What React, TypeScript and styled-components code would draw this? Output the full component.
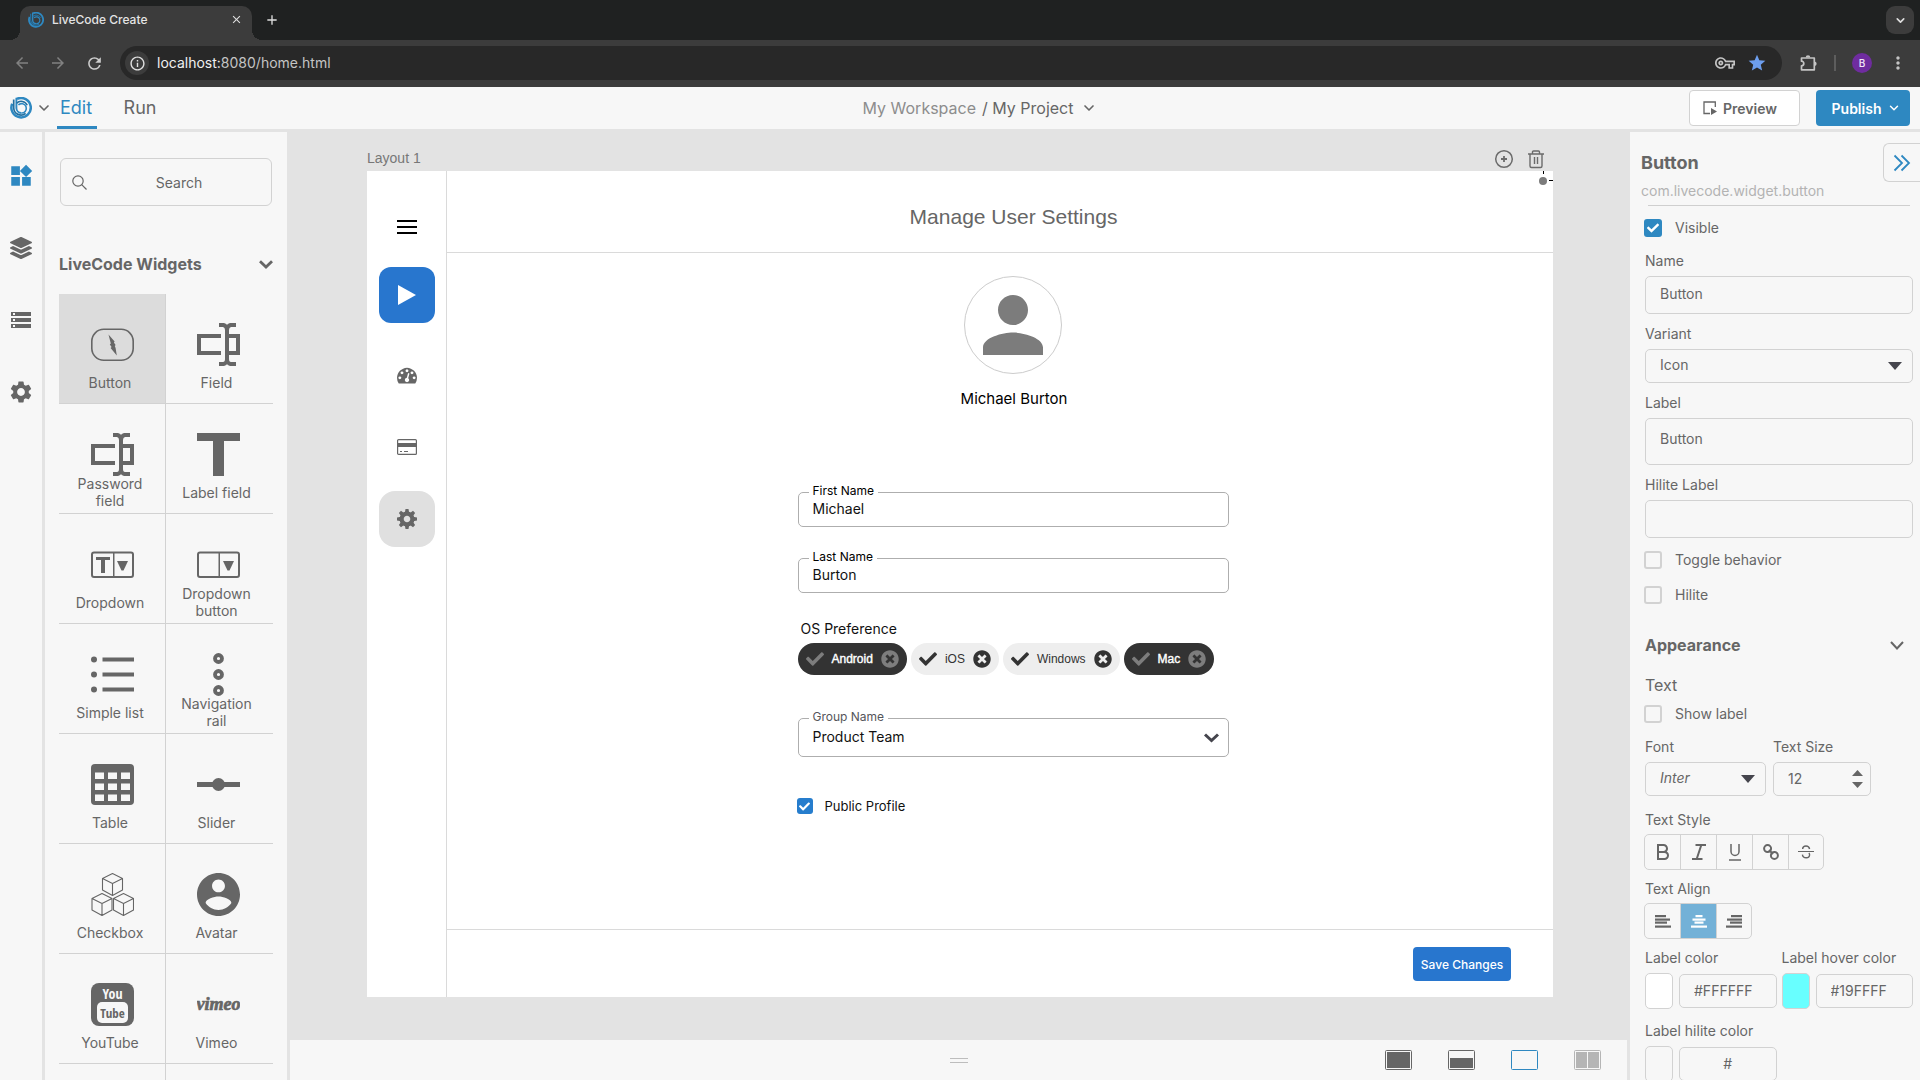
import React from 'react';
import styled, { createGlobalStyle, css } from 'styled-components';
import {
  MdArrowBack, MdArrowForward, MdRefresh, MdInfoOutline, MdOutlineVpnKey, MdStar,
  MdMoreVert, MdWidgets, MdStorage, MdSettings, MdClose, MdAdd,
} from 'react-icons/md';
import { FaLayerGroup, FaCheck, FaTimesCircle } from 'react-icons/fa';
import { RiBold } from 'react-icons/ri';
import { ChevronDown } from 'lucide-react';

const sans = '"Inter", "Liberation Sans", sans-serif';
const helv = '"Liberation Sans", Arial, sans-serif';
const ink = '#666666';
const blue = '#2e88c1';
const action = '#2876ce';
const panel = '#f7f7f7';
const ground = '#e3e3e3';
const line = '#d2d2d2';

const Global = createGlobalStyle`
  *, *::before, *::after { box-sizing: border-box; }
  body { margin: 0; background: ${ground}; font-family: ${sans}; color: ${ink}; overflow: hidden; }
  button, input, select, textarea { font: inherit; color: inherit; }
  button { padding: 0; border: 0; background: none; cursor: pointer; }
  h1, h2, h3, p { margin: 0; }
  svg { display: block; flex: none; }
`;

const Shell = styled.div`
  height: 100vh;
  display: flex;
  flex-direction: column;
`;

/* ---------- browser frame ---------- */

const TabStrip = styled.div`
  height: 40px;
  flex: none;
  display: flex;
  align-items: flex-end;
  padding: 0 6px 0 20px;
  background: #1f2121;
`;
const BrowserTab = styled.div`
  width: 232px;
  height: 34px;
  display: flex;
  align-items: center;
  gap: 8px;
  padding: 0 8px 7px;
  border-radius: 10px 10px 0 0;
  background: #3c3c3c;
  color: #e4e4e4;
  font-size: 12px;
  font-weight: 500;
  position: relative;
  &::before, &::after {
    content: '';
    position: absolute;
    bottom: 0;
    width: 10px;
    height: 10px;
  }
  &::before { left: -10px; background: radial-gradient(circle at 0 0, transparent 10px, #3c3c3c 10px); }
  &::after { right: -10px; background: radial-gradient(circle at 100% 0, transparent 10px, #3c3c3c 10px); }
`;
const TabTitle = styled.span`
  flex: 1;
`;
const StripButton = styled.button`
  display: grid;
  place-items: center;
  height: 26px;
  width: 16px;
  color: #dedede;
`;
const NewTab = styled(StripButton)`
  width: 28px;
  margin: 0 auto 7px 6px;
`;
const TabMenu = styled(StripButton)`
  width: 28px;
  height: 28px;
  margin-bottom: 6px;
  border-radius: 9px;
  background: #3c3c3c;
`;
const Toolbar = styled.div`
  height: 47px;
  flex: none;
  display: flex;
  align-items: center;
  padding: 0 11px 1px 10px;
  background: #3c3c3c;
`;
const NavButton = styled.button`
  width: 24px;
  height: 24px;
  margin-right: 12px;
  display: grid;
  place-items: center;
  color: ${(p: { $dim?: boolean }) => (p.$dim ? '#818181' : '#cccccc')};
`;
const Address = styled.div`
  flex: 1;
  height: 34px;
  margin-left: 2px;
  display: flex;
  align-items: center;
  gap: 8px;
  padding: 0 14px 0 5px;
  border-radius: 17px;
  background: #282828;
  color: #c4c4c4;
  font-size: 14px;
`;
const SiteInfo = styled.button`
  width: 24px;
  height: 24px;
  display: grid;
  place-items: center;
  border-radius: 12px;
  background: #3c3c3c;
  color: #e0e0e0;
`;
const AddressText = styled.span`
  flex: 1;
  padding-bottom: 1px;
  b { font-weight: 400; color: #f0f0f0; }
`;
const AddressButton = styled.button`
  display: grid;
  place-items: center;
  width: 22px;
  color: ${(p: { $on?: boolean }) => (p.$on ? '#6d9eee' : '#c4c4c4')};
`;
const AddressTools = styled.div`
  display: flex;
  gap: 10px;
`;
const Extras = styled.div`
  display: flex;
  align-items: center;
  padding-left: 16px;
  color: #c4c4c4;
`;
const Bar = styled.span`
  width: 2px;
  height: 16px;
  margin: 0 16px 0 14px;
  background: #5d5d5d;
`;
const Profile = styled.button`
  width: 20px;
  height: 20px;
  margin-right: 15px;
  border-radius: 50%;
  background: #6f2c9f;
  color: #f2e8f8;
  font-size: 10px;
  font-weight: 500;
`;

/* ---------- application header ---------- */

const Header = styled.header`
  height: 45px;
  flex: none;
  display: grid;
  grid-template-columns: 1fr auto 1fr;
  padding: 0 10px;
  border-bottom: 3px solid ${ground};
  background: ${panel};
`;
const HeaderLeft = styled.div`
  display: flex;
`;
const LogoButton = styled.button`
  display: flex;
  align-items: center;
  gap: 4px;
  width: 47px;
`;
const Mode = styled.button`
  width: 40px;
  margin-right: 24px;
  padding-right: 2px;
  border-top: 3px solid transparent;
  border-bottom: 3px solid ${(p: { $on?: boolean }) => (p.$on ? blue : 'transparent')};
  color: ${(p: { $on?: boolean }) => (p.$on ? blue : ink)};
  font-size: 18px;
  line-height: 24px;
`;
const Crumbs = styled.nav`
  display: flex;
  align-items: center;
  gap: 6px;
  padding-left: 40px;
  font-size: 16px;
  a { color: #8d8d8d; text-decoration: none; }
`;
const Project = styled.button`
  display: flex;
  align-items: center;
  gap: 8px;
`;
const HeaderRight = styled.div`
  display: flex;
  justify-content: flex-end;
  align-items: center;
  gap: 16px;
`;
const HeaderButton = styled.button`
  height: 36px;
  width: ${(p: { $primary?: boolean }) => (p.$primary ? 94 : 111)}px;
  display: flex;
  align-items: center;
  justify-content: center;
  gap: 6px;
  border-radius: 4px;
  font-size: 14px;
  font-weight: 600;
  ${(p: { $primary?: boolean }) =>
    p.$primary
      ? css`background: ${blue}; color: #fff; padding-left: 7px;`
      : css`background: #fff; border: 1px solid ${line}; padding-right: 9px;`}
`;

/* ---------- body columns ---------- */

const Body = styled.div`
  flex: 1;
  min-height: 0;
  display: flex;
`;
const Rail = styled.nav`
  width: 45px;
  flex: none;
  display: flex;
  flex-direction: column;
  align-items: center;
  gap: 44px;
  padding-top: 30px;
  border-right: 3px solid ${ground};
  background: ${panel};
`;
const RailButton = styled.button`
  width: 28px;
  height: 28px;
  display: grid;
  place-items: center;
  color: ${(p: { $on?: boolean }) => (p.$on ? blue : ink)};
`;
const Library = styled.aside`
  width: 242px;
  flex: none;
  overflow: hidden;
  padding: 26px 14px 0;
  background: ${panel};
`;
const SearchBox = styled.label`
  height: 48px;
  margin: 0 1px;
  display: flex;
  align-items: center;
  padding-left: 11px;
  border: 1px solid ${line};
  border-radius: 6px;
`;
const SearchInput = styled.input`
  flex: 1;
  min-width: 0;
  border: 0;
  outline: 0;
  background: none;
  text-align: center;
  font-size: 14px;
  &::placeholder { color: ${ink}; opacity: 1; }
`;
const GroupTitle = styled.button`
  width: 100%;
  height: 24px;
  margin: 46px 0 17px;
  display: flex;
  align-items: center;
  justify-content: space-between;
  font-size: 16px;
  font-weight: 700;
`;
const Widgets = styled.div`
  display: grid;
  grid-template-columns: 1fr 1fr;
  padding-top: 1px;
`;
const Tile = styled.button`
  height: 110px;
  display: flex;
  flex-direction: column;
  align-items: center;
  padding-top: 29px;
  border-bottom: 1px solid ${line};
  background: ${(p: { $on?: boolean }) => (p.$on ? '#dcdcdc' : 'none')};
  &:nth-child(odd) { border-right: 1px solid ${line}; }
  &:nth-child(even) { padding-right: 2px; }
`;
const TileLabel = styled.span`
  width: 90px;
  height: 32px;
  display: flex;
  align-items: center;
  justify-content: center;
  padding-right: 4px;
  font-size: 14px;
  line-height: 17px;
`;

/* ---------- canvas ---------- */

const Stage = styled.main`
  flex: 1;
  min-width: 0;
  display: flex;
  flex-direction: column;
`;
const Work = styled.div`
  flex: 1;
  min-height: 0;
  display: flex;
  flex-direction: column;
  padding: 0 77px 43px 80px;
`;
const LayoutBar = styled.div`
  height: 39px;
  display: flex;
  align-items: flex-end;
  gap: 13px;
  padding: 0 8px 2px 0;
  font-family: ${helv};
  font-size: 14px;
  line-height: 22px;
  color: #777;
  span { flex: 1; }
`;
const LayoutButton = styled.button`
  height: 20px;
`;
const Artboard = styled.section`
  flex: 1;
  display: flex;
  position: relative;
  background: #fff;
`;
const Marker = styled.svg`
  position: absolute;
  top: 0;
  right: 0;
`;
const AppRail = styled.nav`
  width: 80px;
  display: flex;
  flex-direction: column;
  align-items: center;
  gap: 16px;
  padding-top: 28px;
  border-right: 1px solid #dadada;
`;
const AppRailButton = styled.button`
  width: 56px;
  height: 56px;
  display: grid;
  place-items: center;
  border-radius: ${(p: { $tone?: string }) => (p.$tone === 'soft' ? 16 : 12)}px;
  ${(p: { $tone?: string }) =>
    p.$tone === 'solid'
      ? css`background: ${action}; color: #fff; margin: -4px 0 8px;`
      : p.$tone === 'soft'
        ? css`background: #e0e0e0;`
        : ''}
`;
const AppMain = styled.div`
  flex: 1;
  display: flex;
  flex-direction: column;
`;
const AppHeader = styled.div`
  height: 82px;
  display: grid;
  place-items: center;
  padding: 10px 0 0 27px;
  border-bottom: 1px solid #dadada;
  h1 { font-family: ${helv}; font-size: 21px; line-height: 28px; font-weight: 400; }
`;
const FormArea = styled.div`
  flex: 1;
  display: flex;
  justify-content: center;
  padding-left: 26px;
`;
const Form = styled.form`
  width: 431px;
  display: flex;
  flex-direction: column;
  align-items: flex-start;
  padding-top: 23px;
  color: #111;
`;
const Avatar = styled.div`
  width: 98px;
  height: 98px;
  align-self: center;
  display: grid;
  place-items: center;
  border: 1px solid #cccccc;
  border-radius: 50%;
  color: #7c7c7c;
`;
const PersonName = styled.p`
  align-self: center;
  margin: 15px 0 83px;
  padding-left: 2px;
  font-size: 15px;
  line-height: 20px;
  color: #000;
`;
const Outlined = styled.div`
  width: 100%;
  height: ${(p: { $tall?: boolean }) => (p.$tall ? 39 : 35)}px;
  position: relative;
  display: flex;
  align-items: center;
  border: 1px solid #aeaeae;
  border-radius: 5px;
  & + & { margin-top: 31px; }
  label {
    position: absolute;
    left: 10px;
    top: -11px;
    padding: 0 4px;
    background: #fff;
    font-size: 12px;
    line-height: 18px;
    color: ${(p: { $tall?: boolean }) => (p.$tall ? '#55555a' : '#000')};
  }
  input, select {
    width: 100%;
    height: 100%;
    appearance: none;
    border: 0;
    outline: 0;
    padding: 0 14px 3px;
    background: none;
    font-size: 14px;
    color: #111;
  }
  svg { position: absolute; right: 7px; pointer-events: none; color: #45454d; }
`;
const Caption = styled.p`
  margin: 26px 0 4px 3px;
  font-size: 14px;
  line-height: 20px;
`;
const Chips = styled.div`
  display: flex;
  gap: 4px;
  margin-bottom: 43px;
`;
const Chip = styled.button`
  height: 32px;
  display: flex;
  align-items: center;
  gap: 8px;
  padding: 0 8px;
  border-radius: 16px;
  font-family: ${helv};
  font-size: 12px;
  ${(p: { $on?: boolean }) =>
    p.$on
      ? css`background: #333; color: #fff; -webkit-text-stroke: 0.4px #fff; svg { color: #7d7d7d; }`
      : css`background: #eee; color: #333;`}
`;
const FormTick = styled.div`
  margin: 40px 0 0 -1px;
`;
const AppFooter = styled.div`
  height: 68px;
  display: flex;
  justify-content: flex-end;
  align-items: flex-start;
  padding: 17px 42px 0 0;
  border-top: 1px solid #dadada;
`;
const Save = styled.button`
  width: 98px;
  height: 34px;
  border-radius: 4px;
  background: ${action};
  color: #fff;
  font-size: 12px;
  font-weight: 500;
`;
const BottomBar = styled.div`
  height: 40px;
  flex: none;
  margin: 0 3px;
  display: grid;
  grid-template-columns: 1fr auto 1fr;
  align-items: center;
  padding: 0 26px;
  background: ${panel};
`;
const Grip = styled.button`
  grid-column: 2;
  width: 18px;
  height: 5px;
  border: solid #bdbdbd;
  border-width: 1px 0;
`;
const Views = styled.div`
  display: flex;
  justify-content: flex-end;
  gap: 36px;
`;

/* ---------- tick boxes ---------- */

const TickRow = styled.label`
  display: flex;
  align-items: center;
  gap: ${(p: { $app?: boolean }) => (p.$app ? 12 : 13)}px;
  font-size: ${(p: { $app?: boolean }) => (p.$app ? 13 : 14)}px;
  line-height: 18px;
  cursor: pointer;
`;
const TickBox = styled.span`
  display: grid;
  place-items: center;
  color: #fff;
  > * { grid-area: 1 / 1; }
  svg { pointer-events: none; visibility: hidden; z-index: 1; }
  input:checked + svg { visibility: visible; }
`;
const TickInput = styled.input<{ $app?: boolean }>`
  appearance: none;
  margin: 0;
  width: ${p => (p.$app ? 16 : 18)}px;
  height: ${p => (p.$app ? 16 : 18)}px;
  border: 2px solid ${line};
  border-radius: 3px;
  &:checked { border: 0; background: ${p => (p.$app ? '#267dcd' : blue)}; }
`;

function Tick({ label, checked = false, app = false }: { label: string; checked?: boolean; app?: boolean }) {
  return (
    <TickRow $app={app}>
      <TickBox>
        <TickInput type="checkbox" defaultChecked={checked} $app={app} />
        <FaCheck size={app ? 11 : 12} />
      </TickBox>
      {label}
    </TickRow>
  );
}

/* ---------- inspector ---------- */

const Inspector = styled.aside`
  width: 290px;
  flex: none;
  overflow: hidden;
  background: ${panel};
`;
const InspectorHead = styled.div`
  display: flex;
  align-items: flex-start;
  padding-left: 11px;
`;
const InspectorTitle = styled.div`
  flex: 1;
  padding-top: 19px;
  h2 { font-size: 18px; line-height: 24px; font-weight: 700; }
  p { margin-top: 7px; font-size: 14px; line-height: 18px; color: #b3b3b3; }
`;
const Collapse = styled.button`
  width: 37px;
  height: 39px;
  margin-top: 11px;
  display: grid;
  place-items: center;
  border: 1px solid ${line};
  border-right: 0;
  border-radius: 6px 0 0 6px;
  color: ${blue};
`;
const Rule = styled.div`
  height: 1px;
  margin: 5px 10px 0 18px;
  background: #cfcfcf;
`;
const Props = styled.form`
  display: flex;
  flex-direction: column;
  padding: 13px 7px 0 14px;
`;
const Group = styled.div<{ $top: number; $gap: number }>`
  display: flex;
  flex-direction: column;
  gap: ${p => p.$gap}px;
  padding-top: ${p => p.$top}px;
`;
const Field = styled.div<{ $flush?: boolean }>`
  display: flex;
  flex-direction: column;
  gap: ${p => (p.$flush ? 5 : 6)}px;
  padding-left: ${p => (p.$flush ? 0 : 1)}px;
  > label, > span {
    font-size: 14px;
    line-height: 18px;
    padding-left: ${p => (p.$flush ? 1 : 0)}px;
  }
`;
const box = css`
  width: 100%;
  min-width: 0;
  border: 1px solid ${line};
  border-radius: 5px;
  outline: 0;
  background: none;
  font-size: 14px;
`;
const TextInput = styled.input<{ $short?: boolean; $center?: boolean }>`
  ${box}
  height: ${p => (p.$short ? 34 : 38)}px;
  padding: 0 14px ${p => (p.$short ? 2 : 4)}px;
  text-align: ${p => (p.$center ? 'center' : 'left')};
`;
const TextArea = styled.textarea`
  ${box}
  display: block;
  height: 47px;
  resize: none;
  padding: 11px 14px;
  line-height: 18px;
`;
const Picker = styled.div<{ $italic?: boolean }>`
  position: relative;
  display: flex;
  align-items: center;
  select {
    ${box}
    appearance: none;
    height: 34px;
    padding: 0 14px 3px;
    font-style: ${p => (p.$italic ? 'italic' : 'normal')};
  }
  svg { position: absolute; right: 11px; pointer-events: none; color: #45454d; }
`;
const Stepper = styled.div`
  position: relative;
  display: flex;
  align-items: center;
  input { appearance: textfield; }
  input::-webkit-inner-spin-button { display: none; }
`;
const StepButtons = styled.div`
  position: absolute;
  right: 8px;
  display: grid;
  gap: 6px;
`;
const SectionTitle = styled.button`
  display: flex;
  justify-content: space-between;
  align-items: center;
  height: 24px;
  margin: 29px 9px 18px 1px;
  font-size: 16px;
  font-weight: 700;
`;
const SubTitle = styled.h3`
  margin: 0 0 10px 1px;
  font-size: 16px;
  line-height: 20px;
  font-weight: 400;
`;
const Sizes = styled.div`
  display: grid;
  grid-template-columns: 122px 99px;
  gap: 6px;
  padding: 15px 0;
`;
const Segments = styled.div`
  display: flex;
  align-self: flex-start;
  border: 1px solid ${line};
  border-radius: 5px;
  overflow: hidden;
`;
const Segment = styled.button<{ $on?: boolean }>`
  width: 36px;
  height: 34px;
  display: grid;
  place-items: center;
  background: ${p => (p.$on ? '#73b1d7' : 'none')};
  color: ${p => (p.$on ? '#fff' : ink)};
  & + & { border-left: 1px solid ${line}; }
  &:first-child, &:last-child { width: 35px; }
`;
const Colors = styled.div`
  display: grid;
  grid-template-columns: 1fr 1fr;
  gap: 13px 4px;
  padding-top: 10px;
`;
const ColorRow = styled.div`
  display: flex;
  align-items: center;
  gap: 6px;
`;
const Swatch = styled.button<{ $fill: string }>`
  width: 28px;
  height: 36px;
  flex: none;
  border: 1px solid ${line};
  border-radius: 5px;
  background: ${p => p.$fill};
`;

/* ---------- drawings ---------- */

const Logo = ({ size }: { size: number }) => (
  <svg width={size} height={size} viewBox="0 0 22 22" fill="none" stroke={blue}>
    <path d="M7 1.900 A9.700 9.700 0 1 1 2.200 6.800" strokeWidth="2.500" />
    <path d="M3.700 2.500 V11 A7.300 7.300 0 0 0 15.600 16.400" strokeWidth="1.700" stroke="#236f9f" />
    <path d="M6.400 .8 V11.300 A5 5 0 0 0 11.300 16" strokeWidth="1.900" />
    <path d="M6.600 6.300 A6.500 6.500 0 0 1 17.200 8.200" strokeWidth="1.600" stroke="#236f9f" />
    <path d="M11.300 16 A4.700 4.700 0 1 0 8.400 7.900" strokeWidth="1.600" />
  </svg>
);

const Puzzle = () => (
  <svg width="18" height="18" viewBox="0 0 18 18" fill="currentColor">
    <path d="M1.500 4V7.200A2.300 2.300 0 0 1 1.500 11.800V15.800H14.300V4Z" fill="none" stroke="currentColor" strokeWidth="1.700" strokeLinejoin="round" />
    <path d="M5.700 3.500A2.300 2.300 0 0 1 10.300 3.500Z M14.800 7.500A2.300 2.300 0 0 1 14.800 12Z" />
  </svg>
);

const DoubleChevron = () => (
  <svg width="18" height="18" viewBox="0 0 18 18" fill="none" stroke="currentColor" strokeWidth="1.800">
    <path d="M1.500 1.500L9 9L1.500 16.500M8.500 1.500L16 9L8.500 16.500" />
  </svg>
);

const TileArt = ({ children }: { children: React.ReactNode }) => (
  <svg width="43" height="43" viewBox="0 0 43 43" fill={ink}>{children}</svg>
);
const FieldArt = (
  <TileArt>
    <path d="M0 11H24V15H4V28H24V32H0Z M32 11H43V32H32V28H39V15H32Z" />
    <path d="M22 0H27Q30 1 30 2Q30 1 33 0H39V4H34Q32 4.500 32 7V36Q32 39 34 39H39V43H33Q30 42 30 41Q30 42 27 43H22V39H26Q28 39 28 36V7Q28 4.500 26 4H22Z" />
  </TileArt>
);
const Cube = ({ x, y }: { x: number; y: number }) => (
  <path
    transform={`translate(${x} ${y})`}
    d="M0 5.500 L10 .6 L20 5.500 V17 L10 22.400 L0 17 Z L10 10.500 L20 5.500 M10 10.500 V22.400"
    fill="none" stroke={ink} strokeWidth="1.100" strokeLinejoin="round"
  />
);
const tiles: { name: string; on?: boolean; art: React.ReactNode }[] = [
  {
    name: 'Button', on: true, art: (
      <TileArt>
        <rect x=".8" y="6.300" width="41.400" height="31" rx="12" fill="none" stroke={ink} strokeWidth="1.600" />
        <path d="M17.500 11.500L23.600 18.500L22.900 19.500L24.600 22L23.800 23L24.600 25L25.800 32.500L19.600 25L20.600 24L18.800 21.500L19.800 20.500Z" />
      </TileArt>
    ),
  },
  { name: 'Field', art: FieldArt },
  { name: 'Password field', art: FieldArt },
  { name: 'Label field', art: <TileArt><rect width="43" height="8" /><rect x="16" width="11" height="43" /></TileArt> },
  {
    name: 'Dropdown', art: (
      <TileArt>
        <rect x="1" y="9.500" width="41" height="24.500" rx="2" fill="none" stroke={ink} strokeWidth="2" />
        <rect x="22" y="10" width="1.500" height="24" />
        <rect x="5" y="14" width="14" height="3" /><rect x="10" y="14" width="4" height="16" />
        <path d="M26 18H37L32.500 27.500H30.500Z" />
      </TileArt>
    ),
  },
  {
    name: 'Dropdown button', art: (
      <TileArt>
        <rect x="1" y="9.500" width="41" height="24.500" rx="2" fill="none" stroke={ink} strokeWidth="2" />
        <rect x="21.500" y="10" width="1.500" height="24" />
        <path d="M26 18H37L32.500 27.500H30.500Z" />
      </TileArt>
    ),
  },
  {
    name: 'Simple list', art: (
      <TileArt>
        {[6.5, 21.5, 36.5].map(y => (
          <g key={y}><circle cx="3" cy={y} r="3" /><rect x="11.500" y={y - 2} width="31.500" height="4" /></g>
        ))}
      </TileArt>
    ),
  },
  {
    name: 'Navigation rail', art: (
      <TileArt>
        {[5.5, 21.5, 37.5].map(y => (
          <circle key={y} cx="21.500" cy={y} r="3.500" fill="none" stroke={ink} strokeWidth="3.800" />
        ))}
      </TileArt>
    ),
  },
  {
    name: 'Table', art: (
      <TileArt>
        <rect y="1" width="43" height="41" rx="4" />
        {[9.5, 20.5, 31.5].map(y => [4, 17, 30].map(x => (
          <rect key={`${x}-${y}`} x={x} y={y} width="9" height="6.500" fill={panel} />
        )))}
      </TileArt>
    ),
  },
  { name: 'Slider', art: <TileArt><rect y="19" width="43" height="5" /><circle cx="21.500" cy="21.500" r="6.500" /></TileArt> },
  { name: 'Checkbox', art: <TileArt><Cube x={11.5} y={0} /><Cube x={1} y={20} /><Cube x={22.5} y={20} /></TileArt> },
  {
    name: 'Avatar', art: (
      <svg width="43" height="43" viewBox="2 2 20 20" fill={ink}>
        <path d="M12 2C6.480 2 2 6.480 2 12s4.480 10 10 10 10-4.480 10-10S17.520 2 12 2zm0 3c1.660 0 3 1.340 3 3s-1.340 3-3 3-3-1.340-3-3 1.340-3 3-3zm0 14.200c-2.500 0-4.710-1.280-6-3.220.03-1.990 4-3.080 6-3.080 1.990 0 5.970 1.090 6 3.080-1.290 1.940-3.500 3.220-6 3.220z" />
      </svg>
    ),
  },
  {
    name: 'YouTube', art: (
      <TileArt>
        <rect width="43" height="43" rx="8" />
        <rect x="6" y="19" width="31" height="21" rx="5" fill={panel} />
        <text x="21.500" y="16" fill={panel} textAnchor="middle" fontFamily="Open Sans Condensed, DejaVu Sans Condensed, Liberation Sans, sans-serif" fontSize="14" fontWeight="700">You</text>
        <text x="21.500" y="35" textAnchor="middle" fontFamily="Open Sans Condensed, Liberation Sans, sans-serif" fontSize="13" fontWeight="700">Tube</text>
      </TileArt>
    ),
  },
  {
    name: 'Vimeo', art: (
      <TileArt>
        <text x="21.500" y="27" textAnchor="middle" fontFamily="Liberation Serif, serif" fontSize="18" fontStyle="italic" fontWeight="700" stroke={ink} strokeWidth=".7">vimeo</text>
      </TileArt>
    ),
  },
  { name: '', art: null },
  { name: '', art: null },
];

const Triangle = ({ up = false, w = 14, h = 8 }: { up?: boolean; w?: number; h?: number }) => (
  <svg width={w} height={h} viewBox="0 0 14 8" preserveAspectRatio="none" fill="currentColor">
    <path d={up ? 'M7 0L14 8H0Z' : 'M0 0H14L7 8Z'} />
  </svg>
);

const ItalicArt = () => (
  <svg width="14" height="16" viewBox="0 0 14 16" fill="none" stroke="currentColor" strokeWidth="2">
    <path d="M3.500 1H14M0 15H10.500M9.300 1L4.700 15" />
  </svg>
);
const UnderlineArt = () => (
  <svg width="12" height="17" viewBox="0 0 12 17" fill="none" stroke="currentColor" strokeWidth="1.500">
    <path d="M2 0V7.500A4 4 0 0 0 10 7.500V0M0 16H12" />
  </svg>
);
const LinkArt = () => (
  <svg width="16" height="16" viewBox="0 0 16 16" fill="none" stroke="currentColor" strokeWidth="2">
    <circle cx="4.600" cy="4.600" r="3.500" /><circle cx="11.400" cy="11.400" r="3.500" /><path d="M6 6L10 10" />
  </svg>
);
const StrikeArt = () => (
  <svg width="16" height="14" viewBox="0 0 16 14" fill="none" stroke="currentColor" strokeWidth="1.400">
    <path d="M0 6.500H16" strokeWidth="1" />
    <path d="M11.600 4Q11 1 8 1Q4.800 1 4.600 4M4.400 9.600Q4.900 12.800 8.200 12.800Q11.600 12.800 11.600 9.800Q11.600 8.600 10.800 8" />
  </svg>
);

const AlignArt = ({ side }: { side: 'left' | 'center' | 'right' }) => (
  <svg width="16" height="13" viewBox="0 0 16 13" fill="currentColor">
    {(side === 'center' ? [7, 13, 9, 16] : [11, 15, 12, 16]).map((w, i) => (
      <rect key={i} y={[0, 3.5, 6.5, 10.5][i]} height="2.200" width={w}
        x={side === 'left' ? 0 : side === 'right' ? 16 - w : (16 - w) / 2} />
    ))}
  </svg>
);

const ViewArt = ({ kind }: { kind: string }) => {
  const stroke = kind === 'blank' ? blue : kind === 'split' ? '#b5b5b5' : ink;
  return (
    <svg width="27" height="20" viewBox="0 0 27 20" fill={stroke}>
      <rect x=".5" y=".5" width="26" height="19" rx="1" fill="none" stroke={stroke} />
      {kind === 'full' && <rect x="2" y="2" width="23" height="16" />}
      {kind === 'low' && <rect x="2" y="8" width="23" height="10" />}
      {kind === 'split' && <><rect x="2" y="2" width="11" height="16" /><rect x="14" y="2" width="11" height="16" /></>}
    </svg>
  );
};

const GaugeArt = (
  <svg width="20" height="20" viewBox="0 0 1792 1792" fill={ink}>
    <path d="M384 1152q0-53-37.500-90.500t-90.500-37.500-90.500 37.500-37.500 90.500 37.500 90.500 90.500 37.500 90.500-37.500 37.500-90.500zm192-448q0-53-37.500-90.500t-90.500-37.500-90.500 37.500-37.500 90.500 37.500 90.500 90.500 37.500 90.500-37.500 37.500-90.500zm428 481l101-382q6-26-7.500-48.500t-38.500-29.500-48 6.500-30 39.500l-101 382q-60 5-107 43.500t-63 98.500q-20 77 20 146t117 89 146-20 89-117q16-60-6-117t-72-91zm660-33q0-53-37.500-90.500t-90.500-37.500-90.500 37.500-37.500 90.500 37.500 90.500 90.500 37.500 90.500-37.500 37.500-90.500zm-640-640q0-53-37.500-90.500t-90.500-37.500-90.500 37.500-37.500 90.500 37.500 90.500 90.500 37.500 90.500-37.500 37.500-90.500zm448 192q0-53-37.500-90.500t-90.500-37.500-90.500 37.500-37.500 90.500 37.500 90.500 90.500 37.500 90.500-37.500 37.500-90.500zm320 448q0 261-141 483-19 29-54 29h-1402q-35 0-54-29-141-221-141-483 0-182 71-348t191-286 286-191 348-71 348 71 286 191 191 286 71 348z" />
  </svg>
);
const CogArt = (
  <svg width="20" height="20" viewBox="-10 -10 20 20" fill={ink}>
    {[0, 45, 90, 135].map(a => (
      <path key={a} transform={`rotate(${a})`} d="M-1.500 -10H1.500L2.200 -6V-4H-2.200V-6Z M-1.500 10H1.500L2.200 6V4H-2.200V6Z" />
    ))}
    <circle r="5.400" fill="none" stroke={ink} strokeWidth="4.200" />
  </svg>
);

export default function App() {
  return (
    <Shell>
      <Global />
      <TabStrip>
        <BrowserTab>
          <Logo size={16} />
          <TabTitle>LiveCode Create</TabTitle>
          <StripButton aria-label="Close tab"><MdClose size={13} /></StripButton>
        </BrowserTab>
        <NewTab aria-label="New tab"><MdAdd size={16} /></NewTab>
        <TabMenu aria-label="Search tabs"><ChevronDown size={13} strokeWidth={3} /></TabMenu>
      </TabStrip>
      <Toolbar>
        <NavButton $dim aria-label="Back"><MdArrowBack size={18} /></NavButton>
        <NavButton $dim aria-label="Forward"><MdArrowForward size={18} /></NavButton>
        <NavButton aria-label="Reload"><MdRefresh size={19} /></NavButton>
        <Address>
          <SiteInfo aria-label="Site information"><MdInfoOutline size={17} /></SiteInfo>
          <AddressText><b>localhost:</b>8080/home.html</AddressText>
          <AddressTools>
            <AddressButton aria-label="Passwords"><MdOutlineVpnKey size={20} /></AddressButton>
            <AddressButton $on aria-label="Bookmark"><MdStar size={20} /></AddressButton>
          </AddressTools>
        </Address>
        <Extras>
          <AddressButton aria-label="Extensions"><Puzzle /></AddressButton>
          <Bar />
          <Profile>B</Profile>
          <AddressButton aria-label="Menu"><MdMoreVert size={20} /></AddressButton>
        </Extras>
      </Toolbar>

      <Header>
        <HeaderLeft>
          <LogoButton aria-label="LiveCode menu"><Logo size={22} /><ChevronDown size={16} strokeWidth={2.5} /></LogoButton>
          <Mode $on>Edit</Mode>
          <Mode>Run</Mode>
        </HeaderLeft>
        <Crumbs>
          <a href="#workspace">My Workspace</a>
          <Project><span>/ My Project</span><ChevronDown size={16} strokeWidth={2.5} /></Project>
        </Crumbs>
        <HeaderRight>
          <HeaderButton>
            <svg width="14" height="14" viewBox="0 0 14 14" fill={ink}>
              <path d="M7 12.500H1V1H12.300V6" fill="none" stroke={ink} strokeWidth="1.300" />
              <path d="M8 7L14 10.500L8 14Z" />
            </svg>
            Preview
          </HeaderButton>
          <HeaderButton $primary>Publish<ChevronDown size={14} strokeWidth={2.5} /></HeaderButton>
        </HeaderRight>
      </Header>

      <Body>
        <Rail>
          <RailButton $on aria-label="Widgets"><MdWidgets size={26} /></RailButton>
          <RailButton aria-label="Layers"><FaLayerGroup size={22} /></RailButton>
          <RailButton aria-label="Data"><MdStorage size={24} /></RailButton>
          <RailButton aria-label="Settings"><MdSettings size={26} /></RailButton>
        </Rail>

        <Library>
          <SearchBox>
            <svg width="15" height="15" viewBox="0 0 15 15" fill="none" stroke={ink} strokeWidth="1.200">
              <circle cx="6" cy="6" r="5.200" /><path d="M9.700 9.700L14.500 14.500" />
            </svg>
            <SearchInput aria-label="Search" placeholder="Search" />
          </SearchBox>
          <GroupTitle>
            LiveCode Widgets
            <svg width="14" height="9" viewBox="0 0 14 9" fill="none" stroke={ink} strokeWidth="2.800"><path d="M1 1.200L7 7L13 1.200" /></svg>
          </GroupTitle>
          <Widgets>
            {tiles.map((t, i) => (
              <Tile key={i} $on={t.on} aria-label={t.name || undefined}>
                {t.art}
                {t.name && <TileLabel>{t.name}</TileLabel>}
              </Tile>
            ))}
          </Widgets>
        </Library>

        <Stage>
          <Work>
            <LayoutBar>
              <span>Layout 1</span>
              <LayoutButton aria-label="Add layout">
                <svg width="20" height="20" viewBox="0 0 20 20" fill="none" stroke="#6b6b6b" strokeWidth="1.500">
                  <circle cx="10" cy="10" r="8.300" /><path d="M10 7V13M7 10H13" strokeWidth="1.800" />
                </svg>
              </LayoutButton>
              <LayoutButton aria-label="Delete layout">
                <svg width="18" height="20" viewBox="0 0 18 20" fill="none" stroke="#6b6b6b" strokeWidth="1.400">
                  <path d="M1 5H17M3 5.500V17Q3 18.500 4.500 18.500H13.500Q15 18.500 15 17V5.500M5.500 4.500V3Q5.500 2 6.500 2H11.500Q12.500 2 12.500 3V4.500M7.500 8V15M10.500 8V15" />
                </svg>
              </LayoutButton>
            </LayoutBar>
            <Artboard>
              <Marker width="16" height="16" viewBox="0 0 16 16">
                <circle cx="6" cy="10" r="4" fill="#7c7c7c" />
                <rect x="6" width="1" height="3" /><rect x="12" y="9" width="4" height="1" />
              </Marker>
              <AppRail>
                <AppRailButton aria-label="Menu">
                  <svg width="20" height="14" viewBox="0 0 20 14"><rect width="20" height="2" /><rect y="6" width="20" height="2" /><rect y="12" width="20" height="2" /></svg>
                </AppRailButton>
                <AppRailButton $tone="solid" aria-label="Play">
                  <svg width="18" height="20" viewBox="0 0 18 20" fill="#fff"><path d="M0 0L18 10L0 20Z" /></svg>
                </AppRailButton>
                <AppRailButton aria-label="Dashboard">{GaugeArt}</AppRailButton>
                <AppRailButton aria-label="Billing">
                  <svg width="20" height="16" viewBox="0 0 20 16" fill={ink}>
                    <rect x=".6" y=".6" width="18.800" height="14.800" rx="1" fill="none" stroke={ink} strokeWidth="1.200" />
                    <rect y="4" width="20" height="4" /><rect x="3" y="12" width="2" height="1" /><rect x="7" y="12" width="4" height="1" />
                  </svg>
                </AppRailButton>
                <AppRailButton $tone="soft" aria-label="Settings">{CogArt}</AppRailButton>
              </AppRail>
              <AppMain>
                <AppHeader><h1>Manage User Settings</h1></AppHeader>
                <FormArea>
                  <Form>
                    <Avatar>
                      <svg width="60" height="60" viewBox="4 4 16 16" fill="currentColor">
                        <path d="M12 12c2.210 0 4-1.790 4-4s-1.790-4-4-4-4 1.790-4 4 1.790 4 4 4zm0 2c-2.670 0-8 1.340-8 4v2h16v-2c0-2.660-5.330-4-8-4z" />
                      </svg>
                    </Avatar>
                    <PersonName>Michael Burton</PersonName>
                    <Outlined><label htmlFor="first">First Name</label><input id="first" defaultValue="Michael" /></Outlined>
                    <Outlined><label htmlFor="last">Last Name</label><input id="last" defaultValue="Burton" /></Outlined>
                    <Caption>OS Preference</Caption>
                    <Chips>
                      {[['Android', true], ['iOS', false], ['Windows', false], ['Mac', true]].map(([name, on]) => (
                        <Chip key={String(name)} type="button" $on={Boolean(on)}>
                          <FaCheck size={18} />{name}<FaTimesCircle size={18} />
                        </Chip>
                      ))}
                    </Chips>
                    <Outlined $tall>
                      <label htmlFor="group">Group Name</label>
                      <select id="group"><option>Product Team</option></select>
                      <svg width="20" height="10" viewBox="0 0 20 10" fill="none" stroke="currentColor" strokeWidth="3"><path d="M4 1.500L10.500 7.500L17 1.500" /></svg>
                    </Outlined>
                    <FormTick><Tick app checked label="Public Profile" /></FormTick>
                  </Form>
                </FormArea>
                <AppFooter><Save>Save Changes</Save></AppFooter>
              </AppMain>
            </Artboard>
          </Work>
          <BottomBar>
            <Grip aria-label="Resize" />
            <Views>
              {['full', 'low', 'blank', 'split'].map(k => (
                <button key={k} aria-label={`View ${k}`}><ViewArt kind={k} /></button>
              ))}
            </Views>
          </BottomBar>
        </Stage>

        <Inspector>
          <InspectorHead>
            <InspectorTitle><h2>Button</h2><p>com.livecode.widget.button</p></InspectorTitle>
            <Collapse aria-label="Collapse"><DoubleChevron /></Collapse>
          </InspectorHead>
          <Rule />
          <Props>
            <Tick checked label="Visible" />
            <Group $top={15} $gap={11}>
              <Field><label htmlFor="name">Name</label><TextInput id="name" defaultValue="Button" /></Field>
              <Field>
                <label htmlFor="variant">Variant</label>
                <Picker><select id="variant"><option>Icon</option></select><Triangle /></Picker>
              </Field>
              <Field><label htmlFor="label">Label</label><TextArea id="label" defaultValue="Button" /></Field>
              <Field><label htmlFor="hilite">Hilite Label</label><TextInput id="hilite" /></Field>
            </Group>
            <Group $top={13} $gap={17}>
              <Tick label="Toggle behavior" />
              <Tick label="Hilite" />
            </Group>
            <SectionTitle type="button">
              Appearance
              <svg width="14" height="9" viewBox="0 0 14 9" fill="none" stroke={ink} strokeWidth="2"><path d="M1 1L7 7.500L13 1" /></svg>
            </SectionTitle>
            <SubTitle>Text</SubTitle>
            <Tick label="Show label" />
            <Sizes>
              <Field>
                <label htmlFor="font">Font</label>
                <Picker $italic><select id="font"><option>Inter</option></select><Triangle /></Picker>
              </Field>
              <Field>
                <label htmlFor="size">Text Size</label>
                <Stepper>
                  <TextInput $short id="size" type="number" defaultValue={12} />
                  <StepButtons>
                    <button type="button" aria-label="Increase"><Triangle up w={11} h={6} /></button>
                    <button type="button" aria-label="Decrease"><Triangle w={11} h={6} /></button>
                  </StepButtons>
                </Stepper>
              </Field>
            </Sizes>
            <Group $top={0} $gap={10}>
              <Field $flush>
                <span>Text Style</span>
                <Segments>
                  <Segment type="button" aria-label="Bold"><RiBold size={24} /></Segment>
                  <Segment type="button" aria-label="Italic"><ItalicArt /></Segment>
                  <Segment type="button" aria-label="Underline"><UnderlineArt /></Segment>
                  <Segment type="button" aria-label="Link"><LinkArt /></Segment>
                  <Segment type="button" aria-label="Strikethrough"><StrikeArt /></Segment>
                </Segments>
              </Field>
              <Field $flush>
                <span>Text Align</span>
                <Segments>
                  <Segment type="button" aria-label="Align left"><AlignArt side="left" /></Segment>
                  <Segment type="button" $on aria-label="Align center"><AlignArt side="center" /></Segment>
                  <Segment type="button" aria-label="Align right"><AlignArt side="right" /></Segment>
                </Segments>
              </Field>
            </Group>
            <Colors>
              <Field>
                <label htmlFor="c1">Label color</label>
                <ColorRow><Swatch type="button" $fill="#ffffff" aria-label="Pick label color" /><TextInput $short id="c1" defaultValue="#FFFFFF" /></ColorRow>
              </Field>
              <Field>
                <label htmlFor="c2">Label hover color</label>
                <ColorRow><Swatch type="button" $fill="#68ffff" aria-label="Pick label hover color" /><TextInput $short id="c2" defaultValue="#19FFFF" /></ColorRow>
              </Field>
              <Field>
                <label htmlFor="c3">Label hilite color</label>
                <ColorRow><Swatch type="button" $fill="transparent" aria-label="Pick label hilite color" /><TextInput $short $center id="c3" defaultValue="#" /></ColorRow>
              </Field>
            </Colors>
          </Props>
        </Inspector>
      </Body>
    </Shell>
  );
}
